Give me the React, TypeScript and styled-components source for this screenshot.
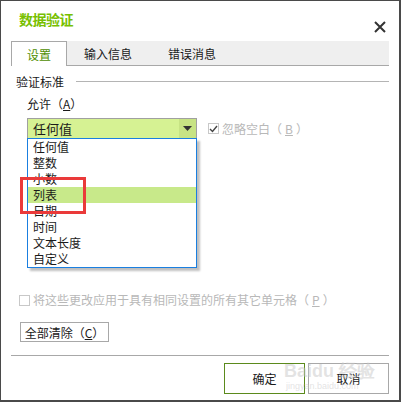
import React from "react";
import styled, { createGlobalStyle } from "styled-components";

const Global = createGlobalStyle`
  html, body { margin: 0; padding: 0; background: #fff; }
  body { font-family: "Noto Sans CJK SC", "Noto Sans", sans-serif; }
`;

const Dialog = styled.div`
  position: relative;
  width: 401px;
  height: 402px;
  box-sizing: border-box;
  border: 1px solid #4a4a4a;
  border-right-width: 2px;
  border-bottom-width: 2px;
  background: #fff;
  display: flex;
  flex-direction: column;
  font-size: 12px;
  color: #1a1a1a;
  overflow: hidden;
`;

const Header = styled.div`
  height: 40px;
  display: flex;
  align-items: center;
  justify-content: space-between;
  padding: 0 13px 0 18px;
`;

const Title = styled.div`
  color: #78c000;
  font-size: 14px;
  font-weight: bold;
  letter-spacing: -0.5px;
  margin-top: -5px;
`;

const Close = styled.div`
  width: 12px;
  height: 12px;
  margin-top: 8px;
`;

const TabBar = styled.div`
  margin: 0 10px;
  height: 24px;
  background: #efefef;
  border-bottom: 1px solid #a8a8a8;
  display: flex;
  align-items: stretch;
`;

const Tab = styled.div<{ $active?: boolean; $w: number }>`
  width: ${(p) => p.$w}px;
  box-sizing: border-box;
  display: flex;
  align-items: center;
  justify-content: center;
  font-size: 12px;
  color: ${(p) => (p.$active ? "#4e8e00" : "#1a1a1a")};
  background: ${(p) => (p.$active ? "#fff" : "transparent")};
  border: ${(p) => (p.$active ? "1px solid #a8a8a8" : "none")};
  border-bottom: none;
  margin-bottom: ${(p) => (p.$active ? "-1px" : "0")};
`;

const Body = styled.div`
  position: relative;
  flex: 1;
  padding: 8px 10px 0 15px;
  display: flex;
  flex-direction: column;
`;

const Group = styled.div`
  display: flex;
  align-items: center;
  gap: 12px;
  height: 14px;
`;

const GroupLine = styled.div`
  flex: 1;
  height: 1px;
  background: #b4b4b4;
`;

const Label = styled.div`
  margin: 9px 0 0 11px;
  height: 14px;
  line-height: 14px;
`;

const U = styled.span`
  text-decoration: underline;
`;

const SelectRow = styled.div`
  margin: 7px 0 0 11px;
  display: flex;
  align-items: center;
  gap: 11px;
`;

const Select = styled.div`
  position: relative;
  width: 170px;
  height: 21px;
  box-sizing: border-box;
  border: 1px solid #a0a0a0;
  background: #d6f293;
  display: flex;
  align-items: stretch;
`;

const SelectText = styled.div`
  flex: 1;
  padding-left: 5px;
  display: flex;
  align-items: center;
  font-size: 13px;
`;

const Arrow = styled.div`
  width: 17px;
  background: #c7e384;
  display: flex;
  align-items: center;
  justify-content: center;
`;

const List = styled.div`
  position: absolute;
  left: -1px;
  top: 19px;
  width: 170px;
  box-sizing: border-box;
  border: 1px solid #1a7fe0;
  background: #fff;
  box-shadow: 3px 3px 2px rgba(0, 0, 0, 0.25);
  z-index: 2;
`;

const Item = styled.div<{ $sel?: boolean }>`
  height: 16px;
  line-height: 16px;
  padding-left: 5px;
  font-size: 12px;
  background: ${(p) => (p.$sel ? "#c8e98a" : "transparent")};
`;

const Check = styled.div`
  width: 11px;
  height: 11px;
  box-sizing: border-box;
  border: 1px solid #c8c8c8;
  display: flex;
  align-items: center;
  justify-content: center;
`;

const CheckLabel = styled.label`
  display: flex;
  align-items: center;
  gap: 3px;
  color: #b8b8b8;
  font-size: 12px;
  line-height: 14px;
`;

const ApplyRow = styled.div`
  margin: 154px 0 0 3px;
`;

const ClearButton = styled.div`
  margin: 15px 0 0 4px;
  width: 89px;
  height: 20px;
  box-sizing: border-box;
  border: 1px solid #a8a8a8;
  display: flex;
  align-items: center;
  justify-content: center;
  font-size: 12px;
`;

const Separator = styled.div`
  margin: 0 10px;
  height: 1px;
  background: #a8a8a8;
`;

const Footer = styled.div`
  height: 44px;
  display: flex;
  justify-content: flex-end;
  gap: 3px;
  padding: 7px 10px 0 0;
  box-sizing: border-box;
`;

const FootButton = styled.div<{ $primary?: boolean }>`
  width: 81px;
  height: 31px;
  box-sizing: border-box;
  border: 1px solid ${(p) => (p.$primary ? "#5b8a1c" : "#a8a8a8")};
  display: flex;
  align-items: center;
  justify-content: center;
  font-size: 12px;
`;

const Highlight = styled.div`
  position: absolute;
  left: 19px;
  top: 176px;
  width: 66px;
  height: 37px;
  box-sizing: border-box;
  border: 3px solid #ea3a3a;
  z-index: 3;
`;

const Watermark = styled.div`
  position: absolute;
  left: 283px;
  top: 360px;
  color: rgba(200, 200, 200, 0.5);
  font-family: "Liberation Sans", sans-serif;
  display: flex;
  flex-direction: column;
  align-items: flex-start;
  pointer-events: none;
  z-index: 4;
`;

const WmBig = styled.div`
  font-size: 18px;
  font-weight: bold;
  line-height: 20px;
`;

const WmSmall = styled.div`
  font-size: 9px;
  line-height: 10px;
  margin-left: 2px;
`;

const items = ["任何值", "整数", "小数", "列表", "日期", "时间", "文本长度", "自定义"];

export default function App() {
  return (
    <>
      <Global />
      <Dialog>
        <Header>
          <Title>数据验证</Title>
          <Close>
            <svg width="12" height="12" viewBox="0 0 12 12">
              <path d="M1 1 L11 11 M11 1 L1 11" stroke="#333" strokeWidth="2" />
            </svg>
          </Close>
        </Header>
        <TabBar>
          <Tab $active $w={56}>设置</Tab>
          <Tab $w={82}>输入信息</Tab>
          <Tab $w={86}>错误消息</Tab>
        </TabBar>
        <Body>
          <Group>
            <span>验证标准</span>
            <GroupLine />
          </Group>
          <Label>
            允许（<U>A</U>）
          </Label>
          <SelectRow>
            <Select>
              <SelectText>任何值</SelectText>
              <Arrow>
                <svg width="9" height="5" viewBox="0 0 9 5">
                  <path d="M0 0 H9 L4.5 5 Z" fill="#333" />
                </svg>
              </Arrow>
              <List>
                {items.map((t) => (
                  <Item key={t} $sel={t === "列表"}>
                    {t}
                  </Item>
                ))}
              </List>
            </Select>
            <CheckLabel>
              <Check>
                <svg width="9" height="8" viewBox="0 0 9 8">
                  <path d="M1 4 L3.5 6.5 L8 1" stroke="#444" strokeWidth="1.4" fill="none" />
                </svg>
              </Check>
              忽略空白（<U>B</U>）
            </CheckLabel>
          </SelectRow>
          <ApplyRow>
            <CheckLabel>
              <Check />
              将这些更改应用于具有相同设置的所有其它单元格（<U>P</U>）
            </CheckLabel>
          </ApplyRow>
          <ClearButton>
            全部清除（<U>C</U>）
          </ClearButton>
        </Body>
        <Separator />
        <Footer>
          <FootButton $primary>确定</FootButton>
          <FootButton>取消</FootButton>
        </Footer>
        <Highlight />
        <Watermark>
          <WmBig>Baidu 经验</WmBig>
          <WmSmall>jingyan.baidu.com</WmSmall>
        </Watermark>
      </Dialog>
    </>
  );
}
